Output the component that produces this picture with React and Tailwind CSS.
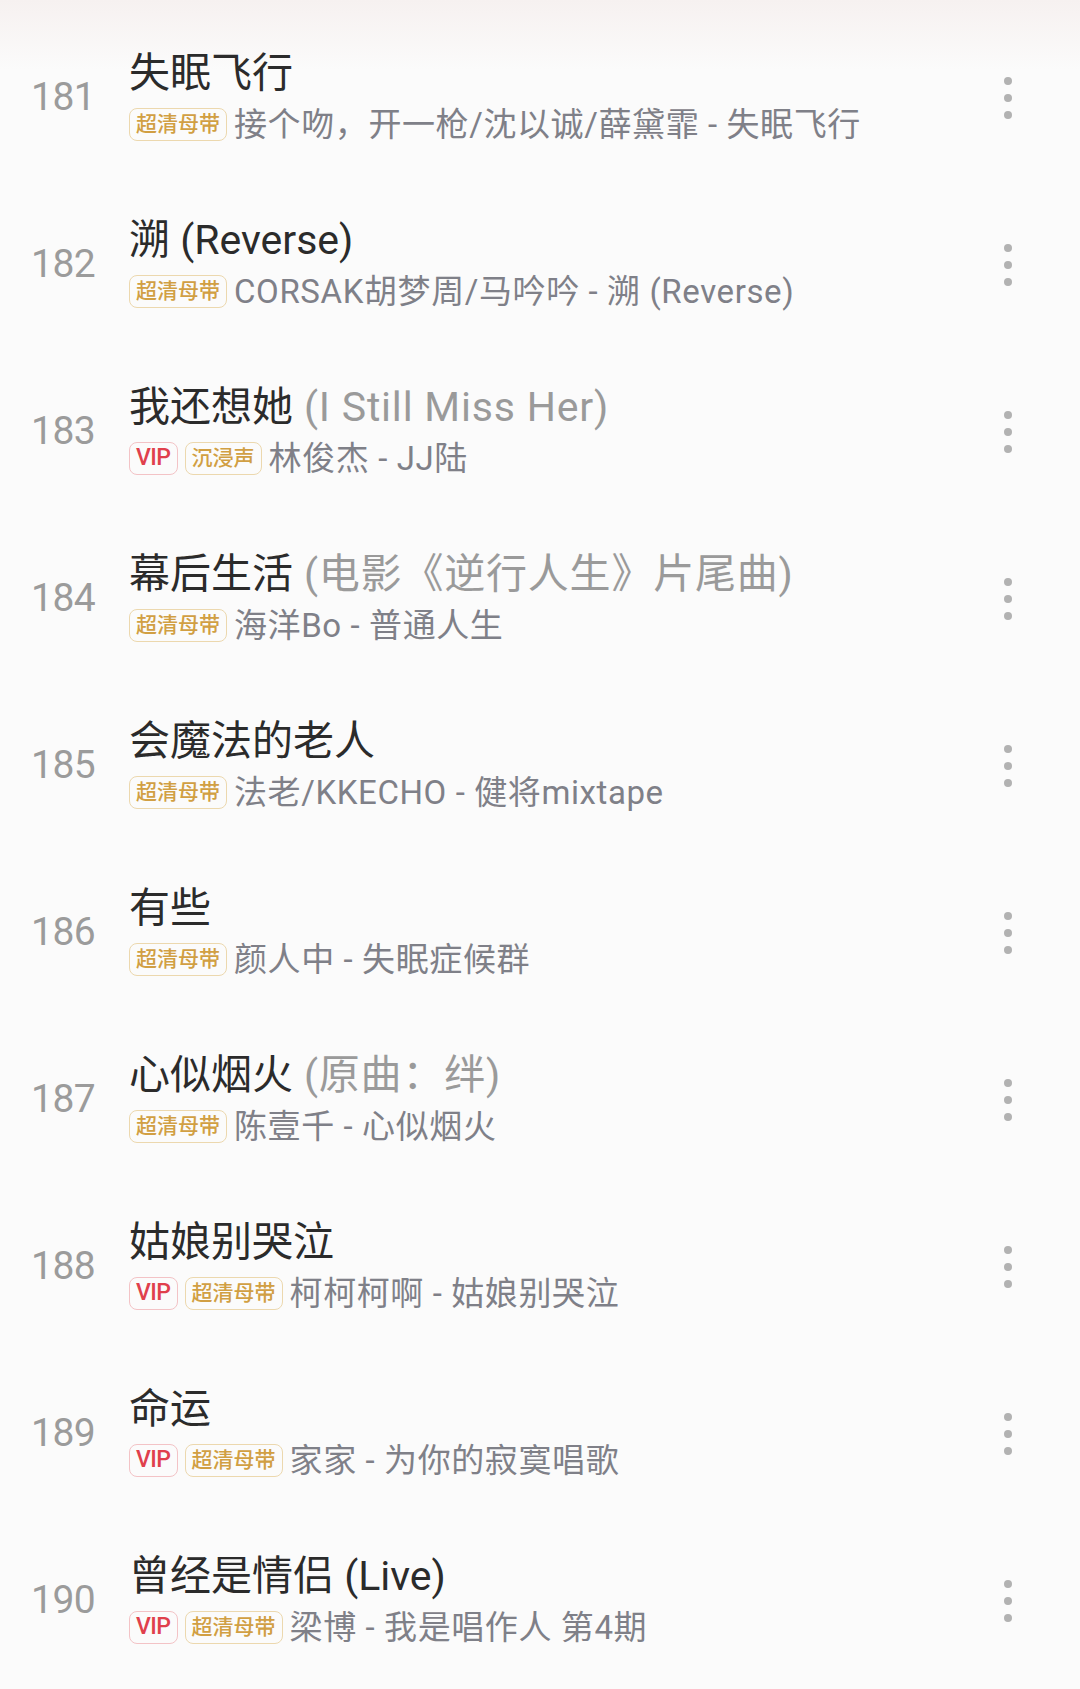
import React from 'react'

const SONGS = [
  { no: 181, title: '失眠飞行', extra: '', tags: ['hq'], sub: '接个吻，开一枪/沈以诚/薛黛霏 - 失眠飞行' },
  { no: 182, title: '溯 (Reverse)', extra: '', tags: ['hq'], sub: 'CORSAK胡梦周/马吟吟 - 溯 (Reverse)' },
  { no: 183, title: '我还想她', extra: '(I Still Miss Her)', tags: ['vip', 'immersive'], sub: '林俊杰 - JJ陆' },
  { no: 184, title: '幕后生活', extra: '(电影《逆行人生》片尾曲)', tags: ['hq'], sub: '海洋Bo - 普通人生' },
  { no: 185, title: '会魔法的老人', extra: '', tags: ['hq'], sub: '法老/KKECHO - 健将mixtape' },
  { no: 186, title: '有些', extra: '', tags: ['hq'], sub: '颜人中 - 失眠症候群' },
  { no: 187, title: '心似烟火', extra: '(原曲：绊)', tags: ['hq'], sub: '陈壹千 - 心似烟火' },
  { no: 188, title: '姑娘别哭泣', extra: '', tags: ['vip', 'hq'], sub: '柯柯柯啊 - 姑娘别哭泣' },
  { no: 189, title: '命运', extra: '', tags: ['vip', 'hq'], sub: '家家 - 为你的寂寞唱歌' },
  { no: 190, title: '曾经是情侣 (Live)', extra: '', tags: ['vip', 'hq'], sub: '梁博 - 我是唱作人 第4期' },
]

const FONT = "font-['Roboto','Noto_Sans_CJK_SC',sans-serif]"

function Tag({ kind }) {
  if (kind === 'vip') {
    return (
      <span className="h-[33px] px-[6px] flex items-center rounded-[8px] border-[1.5px] border-[#f3c3c6] text-[#e0404c] text-[23px] font-medium tracking-[-0.5px] shrink-0">
        VIP
      </span>
    )
  }
  return (
    <span className="h-[33px] px-[6px] flex items-center rounded-[8px] border-[1.5px] border-[#ecd8ae] text-[#d19f43] text-[21px] font-medium shrink-0">
      {kind === 'hq' ? '超清母带' : '沉浸声'}
    </span>
  )
}

function Row({ song }) {
  return (
    <div className="h-[167px] flex items-center">
      <div className="w-[129px] pl-[31px] text-[39px] tracking-[-0.5px] text-[#9b9b9b] leading-none shrink-0">
        {song.no}
      </div>
      <div className="flex-1 flex flex-col -mt-[4px]">
        <div className="text-[41px] leading-[48px] text-[#2b2b2b] whitespace-nowrap">
          {song.title}
          {song.extra && <span className="text-[#9a9a9a] tracking-[0.8px]"> {song.extra}</span>}
        </div>
        <div className="mt-[10px] flex items-center gap-[7px] h-[36px]">
          {song.tags.map((t, i) => <Tag key={i} kind={t} />)}
          <span className="text-[33px] tracking-[0.6px] text-[#7f8088] whitespace-nowrap leading-none">{song.sub}</span>
        </div>
      </div>
      <div className="w-[72px] flex flex-col items-center gap-[9px] shrink-0 mr-[36px]">
        <span className="w-[8px] h-[8px] rounded-full bg-[#b2b2b2]" />
        <span className="w-[8px] h-[8px] rounded-full bg-[#b2b2b2]" />
        <span className="w-[8px] h-[8px] rounded-full bg-[#b2b2b2]" />
      </div>
    </div>
  )
}

export default function App() {
  return (
    <div className={`${FONT} w-[1080px] h-[1689px] overflow-hidden bg-[#fbfbfb] relative`}>
      <div className="absolute inset-x-0 top-0 h-[70px] bg-gradient-to-b from-[#f6f1f0] to-transparent" />
      <div className="relative pt-[14px]">
        {SONGS.map(s => <Row key={s.no} song={s} />)}
      </div>
    </div>
  )
}
